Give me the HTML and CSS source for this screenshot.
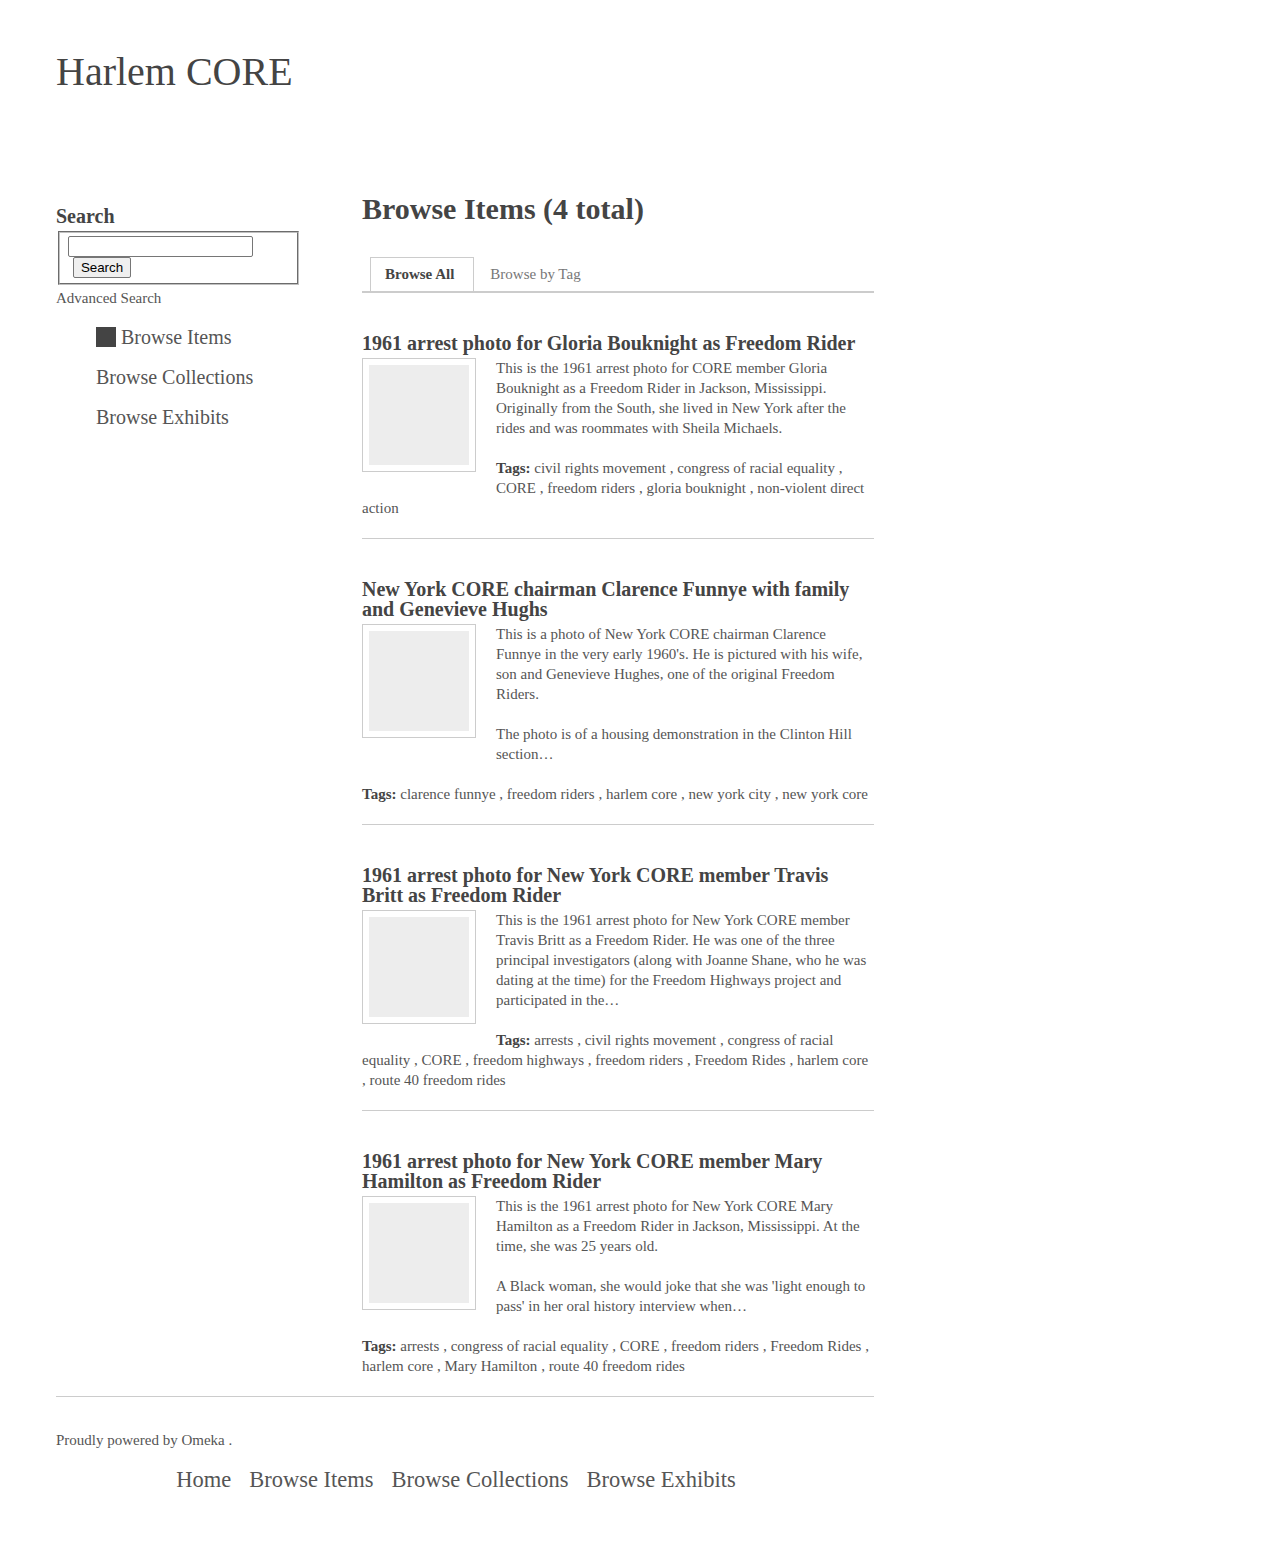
FILE: index.html
```html
<!DOCTYPE html>
<html lang="en">
<head>
<meta charset="utf-8">
<title>Browse Items · Harlem CORE</title>
<link rel="stylesheet" href="styles.css">
</head>
<body>
<div class="wrap">
  <header class="site-header">
    <div class="site-title">Harlem CORE</div>
  </header>

  <div class="main-row">
    <aside class="sidebar">
      <h2 class="search-title">Search</h2>
      <form class="search-form">
        <fieldset class="search-box">
          <input type="text" class="search-input">
          <button type="button" class="search-btn">Search</button>
        </fieldset>
      </form>
      <a class="adv-link" href="#">Advanced Search</a>
      <ul class="side-nav">
        <li><a class="active" href="#">Browse Items</a></li>
        <li><a href="#">Browse Collections</a></li>
        <li><a href="#">Browse Exhibits</a></li>
      </ul>
    </aside>

    <main class="content">
      <h1 class="page-title">Browse Items (4 total)</h1>
      <ul class="tabs">
        <li class="tab current"><a href="#">Browse All</a></li>
        <li class="tab"><a href="#">Browse by Tag</a></li>
      </ul>

      <div class="item">
        <h2 class="item-title">1961 arrest photo for Gloria Bouknight as Freedom Rider</h2>
        <div class="thumb"><div class="thumb-img"></div></div>
        <p class="desc">This is the 1961 arrest photo for CORE member Gloria Bouknight as a Freedom Rider in Jackson, Mississippi. Originally from the South, she lived in New York after the rides and was roommates with Sheila Michaels.</p>
        <div class="tags"><strong>Tags:</strong> <a href="#">civil rights movement</a> , <a href="#">congress of racial equality</a> , <a href="#">CORE</a> , <a href="#">freedom riders</a> , <a href="#">gloria bouknight</a> , <a href="#">non-violent direct action</a></div>
      </div>

      <div class="item">
        <h2 class="item-title">New York CORE chairman Clarence Funnye with family and Genevieve Hughs</h2>
        <div class="thumb"><div class="thumb-img"></div></div>
        <p class="desc">This is a photo of New York CORE chairman Clarence Funnye in the very early 1960's. He is pictured with his wife, son and Genevieve Hughes, one of the original Freedom Riders.</p>
        <p class="desc">The photo is of a housing demonstration in the Clinton Hill section…</p>
        <div class="tags"><strong>Tags:</strong> <a href="#">clarence funnye</a> , <a href="#">freedom riders</a> , <a href="#">harlem core</a> , <a href="#">new york city</a> , <a href="#">new york core</a></div>
      </div>

      <div class="item">
        <h2 class="item-title">1961 arrest photo for New York CORE member Travis Britt as Freedom Rider</h2>
        <div class="thumb"><div class="thumb-img"></div></div>
        <p class="desc">This is the 1961 arrest photo for New York CORE member Travis Britt as a Freedom Rider. He was one of the three principal investigators (along with Joanne Shane, who he was dating at the time) for the Freedom Highways project and participated in the…</p>
        <div class="tags"><strong>Tags:</strong> <a href="#">arrests</a> , <a href="#">civil rights movement</a> , <a href="#">congress of racial equality</a> , <a href="#">CORE</a> , <a href="#">freedom highways</a> , <a href="#">freedom riders</a> , <a href="#">Freedom Rides</a> , <a href="#">harlem core</a> , <a href="#">route 40 freedom rides</a></div>
      </div>

      <div class="item last">
        <h2 class="item-title">1961 arrest photo for New York CORE member Mary Hamilton as Freedom Rider</h2>
        <div class="thumb"><div class="thumb-img"></div></div>
        <p class="desc">This is the 1961 arrest photo for New York CORE Mary Hamilton as a Freedom Rider in Jackson, Mississippi. At the time, she was 25 years old.</p>
        <p class="desc">A Black woman, she would joke that she was 'light enough to pass' in her oral history interview when…</p>
        <div class="tags"><strong>Tags:</strong> <a href="#">arrests</a> , <a href="#">congress of racial equality</a> , <a href="#">CORE</a> , <a href="#">freedom riders</a> , <a href="#">Freedom Rides</a> , <a href="#">harlem core</a> , <a href="#">Mary Hamilton</a> , <a href="#">route 40 freedom rides</a></div>
      </div>
    </main>
  </div>

  <footer class="site-footer">
    <p class="powered">Proudly powered by <a href="#">Omeka</a> .</p>
    <ul class="foot-nav">
      <li><a href="#">Home</a></li>
      <li><a href="#">Browse Items</a></li>
      <li><a href="#">Browse Collections</a></li>
      <li><a href="#">Browse Exhibits</a></li>
    </ul>
  </footer>
</div>
</body>
</html>
```

FILE: styles.css
```css
html, body {
  margin: 0;
  padding: 0;
  background: #fff;
}
body {
  font-family: "Liberation Serif", "Times New Roman", serif;
  font-size: 15px;
  line-height: 20px;
  color: #555;
}
a {
  color: #555;
  text-decoration: none;
}
.wrap {
  width: 818px;
  padding: 0 56px;
}

/* header */
.site-header {
  padding-top: 48px;
  height: 191px;
  box-sizing: border-box;
}
.site-title {
  font-size: 40px;
  line-height: 48px;
  color: #444;
}

/* layout */
.main-row {
  display: flex;
  gap: 62px;
}
.sidebar {
  width: 244px;
  flex: none;
  padding-top: 13px;
}
.content {
  width: 512px;
  flex: none;
}

/* sidebar */
.search-title {
  margin: 0;
  font-size: 20px;
  line-height: 24px;
  font-weight: bold;
  color: #444;
}
.search-form {
  margin: 0;
}
.search-box {
  margin: 3px 2px 0;
  width: 241px;
  box-sizing: border-box;
  padding: 3px 8px 5px;
  border: 2px groove #c0c0c0;
}
.search-input {
  display: block;
  width: 185px;
  height: 21px;
  box-sizing: border-box;
  margin: 0;
  border: 1px solid #767676;
  border-radius: 2px;
  padding: 1px 2px;
}
.search-btn {
  display: block;
  margin: 0 0 0 5px;
  width: 58px;
  height: 21px;
  box-sizing: border-box;
  padding: 0;
  font-family: "Liberation Sans", Arial, sans-serif;
  font-size: 13.33px;
  color: #000;
  background: #efefef;
  border: 1px solid #767676;
  border-radius: 2px;
}
.adv-link {
  display: block;
  margin-top: 3px;
  color: #555;
}
.side-nav {
  list-style: none;
  margin: 19px 0 0;
  padding: 0 0 0 40px;
}
.side-nav li {
  margin-bottom: 20px;
  font-size: 20px;
  line-height: 20px;
}
.side-nav a {
  color: #555;
  display: inline-block;
}
.side-nav a.active {
  border-left: 20px solid #444;
  padding-left: 5px;
}

/* content */
.page-title {
  margin: 0;
  font-size: 30px;
  line-height: 36px;
  font-weight: bold;
  color: #444;
}
.tabs {
  list-style: none;
  display: flex;
  margin: 30px 0 0;
  padding: 0 0 0 8px;
  border-bottom: 2px solid #ccc;
}
.tab a {
  display: block;
  padding: 6px 15px 7px;
  border: 1px solid transparent;
  border-bottom: none;
  color: #777;
}
.tab.current a {
  border-color: #ccc;
  font-weight: bold;
  color: #444;
  padding-right: 19px;
  padding-left: 14px;
}

.item {
  padding: 40px 0 20px;
  border-bottom: 1px solid #ccc;
}
.item::after {
  content: "";
  display: table;
  clear: both;
}
.item.last {
  border-bottom: none;
}
.item-title {
  margin: 0 0 5px;
  font-size: 20px;
  line-height: 20px;
  font-weight: bold;
  color: #444;
}
.thumb {
  float: left;
  margin: 0 20px 15px 0;
  padding: 6px;
  border: 1px solid #ccc;
}
.thumb-img {
  width: 100px;
  height: 100px;
  background: #ededed;
}
.desc {
  margin: 0 0 20px;
}
.tags strong {
  color: #444;
}

/* footer */
.site-footer {
  border-top: 1px solid #ccc;
  padding-top: 33px;
}
.powered {
  margin: 0;
}
.foot-nav {
  list-style: none;
  display: flex;
  justify-content: center;
  margin: 16px 0 0;
  padding: 0;
  font-size: 22.5px;
  line-height: 27px;
}
.foot-nav li {
  margin-right: 18px;
}
.foot-nav a {
  color: #555;
}
```
